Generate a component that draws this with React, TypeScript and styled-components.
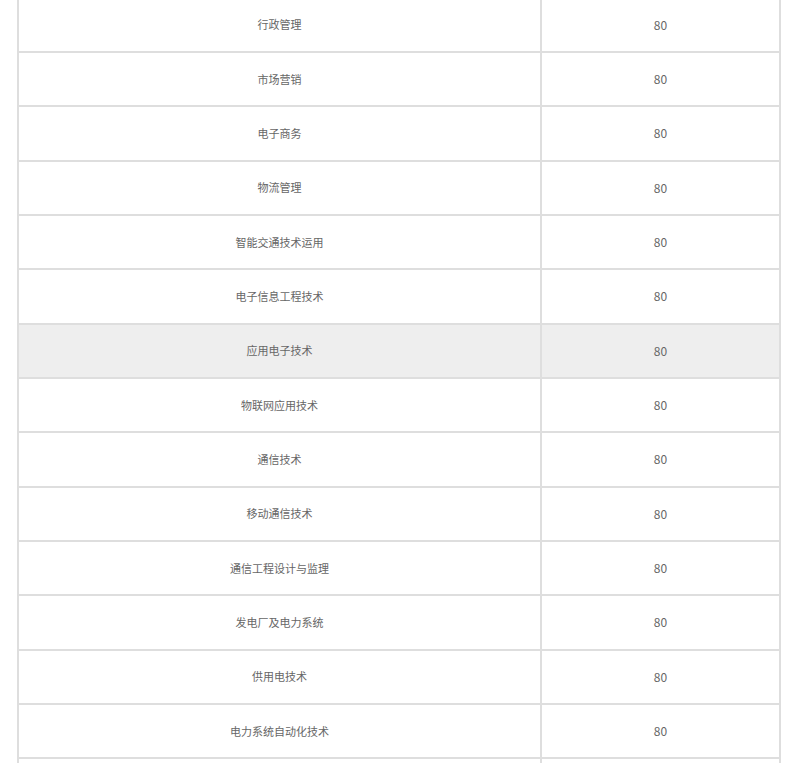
import React from "react";
import styled, { createGlobalStyle } from "styled-components";

const Global = createGlobalStyle`
  html, body { margin: 0; padding: 0; background: #fff; }
  body { font-family: "Noto Sans CJK SC", "Noto Sans", sans-serif; }
`;

const Table = styled.div`
  margin: -3.33px 0 0 17px;
  width: 764px;
  border: 1px solid #dedede;
  box-sizing: border-box;
`;

const Row = styled.div<{ $hl?: boolean }>`
  display: grid;
  grid-template-columns: 523px 239px;
  height: 54.333px;
  background: ${(p) => (p.$hl ? "#eeeeee" : "#ffffff")};
`;

const Cell = styled.div<{ $num?: boolean }>`
  border: 1px solid #dedede;
  box-sizing: border-box;
  display: flex;
  align-items: center;
  justify-content: center;
  font-size: ${(p) => (p.$num ? "12px" : "11px")};
  color: #666;
  line-height: 1;
`;

const rows = [
  "行政管理",
  "市场营销",
  "电子商务",
  "物流管理",
  "智能交通技术运用",
  "电子信息工程技术",
  "应用电子技术",
  "物联网应用技术",
  "通信技术",
  "移动通信技术",
  "通信工程设计与监理",
  "发电厂及电力系统",
  "供用电技术",
  "电力系统自动化技术",
  "电力系统继电保护与自动化技术",
];

export default function App() {
  return (
    <>
      <Global />
      <Table>
        {rows.map((r, i) => (
          <Row key={i} $hl={i === 6}>
            <Cell>{r}</Cell>
            <Cell $num>80</Cell>
          </Row>
        ))}
      </Table>
    </>
  );
}
